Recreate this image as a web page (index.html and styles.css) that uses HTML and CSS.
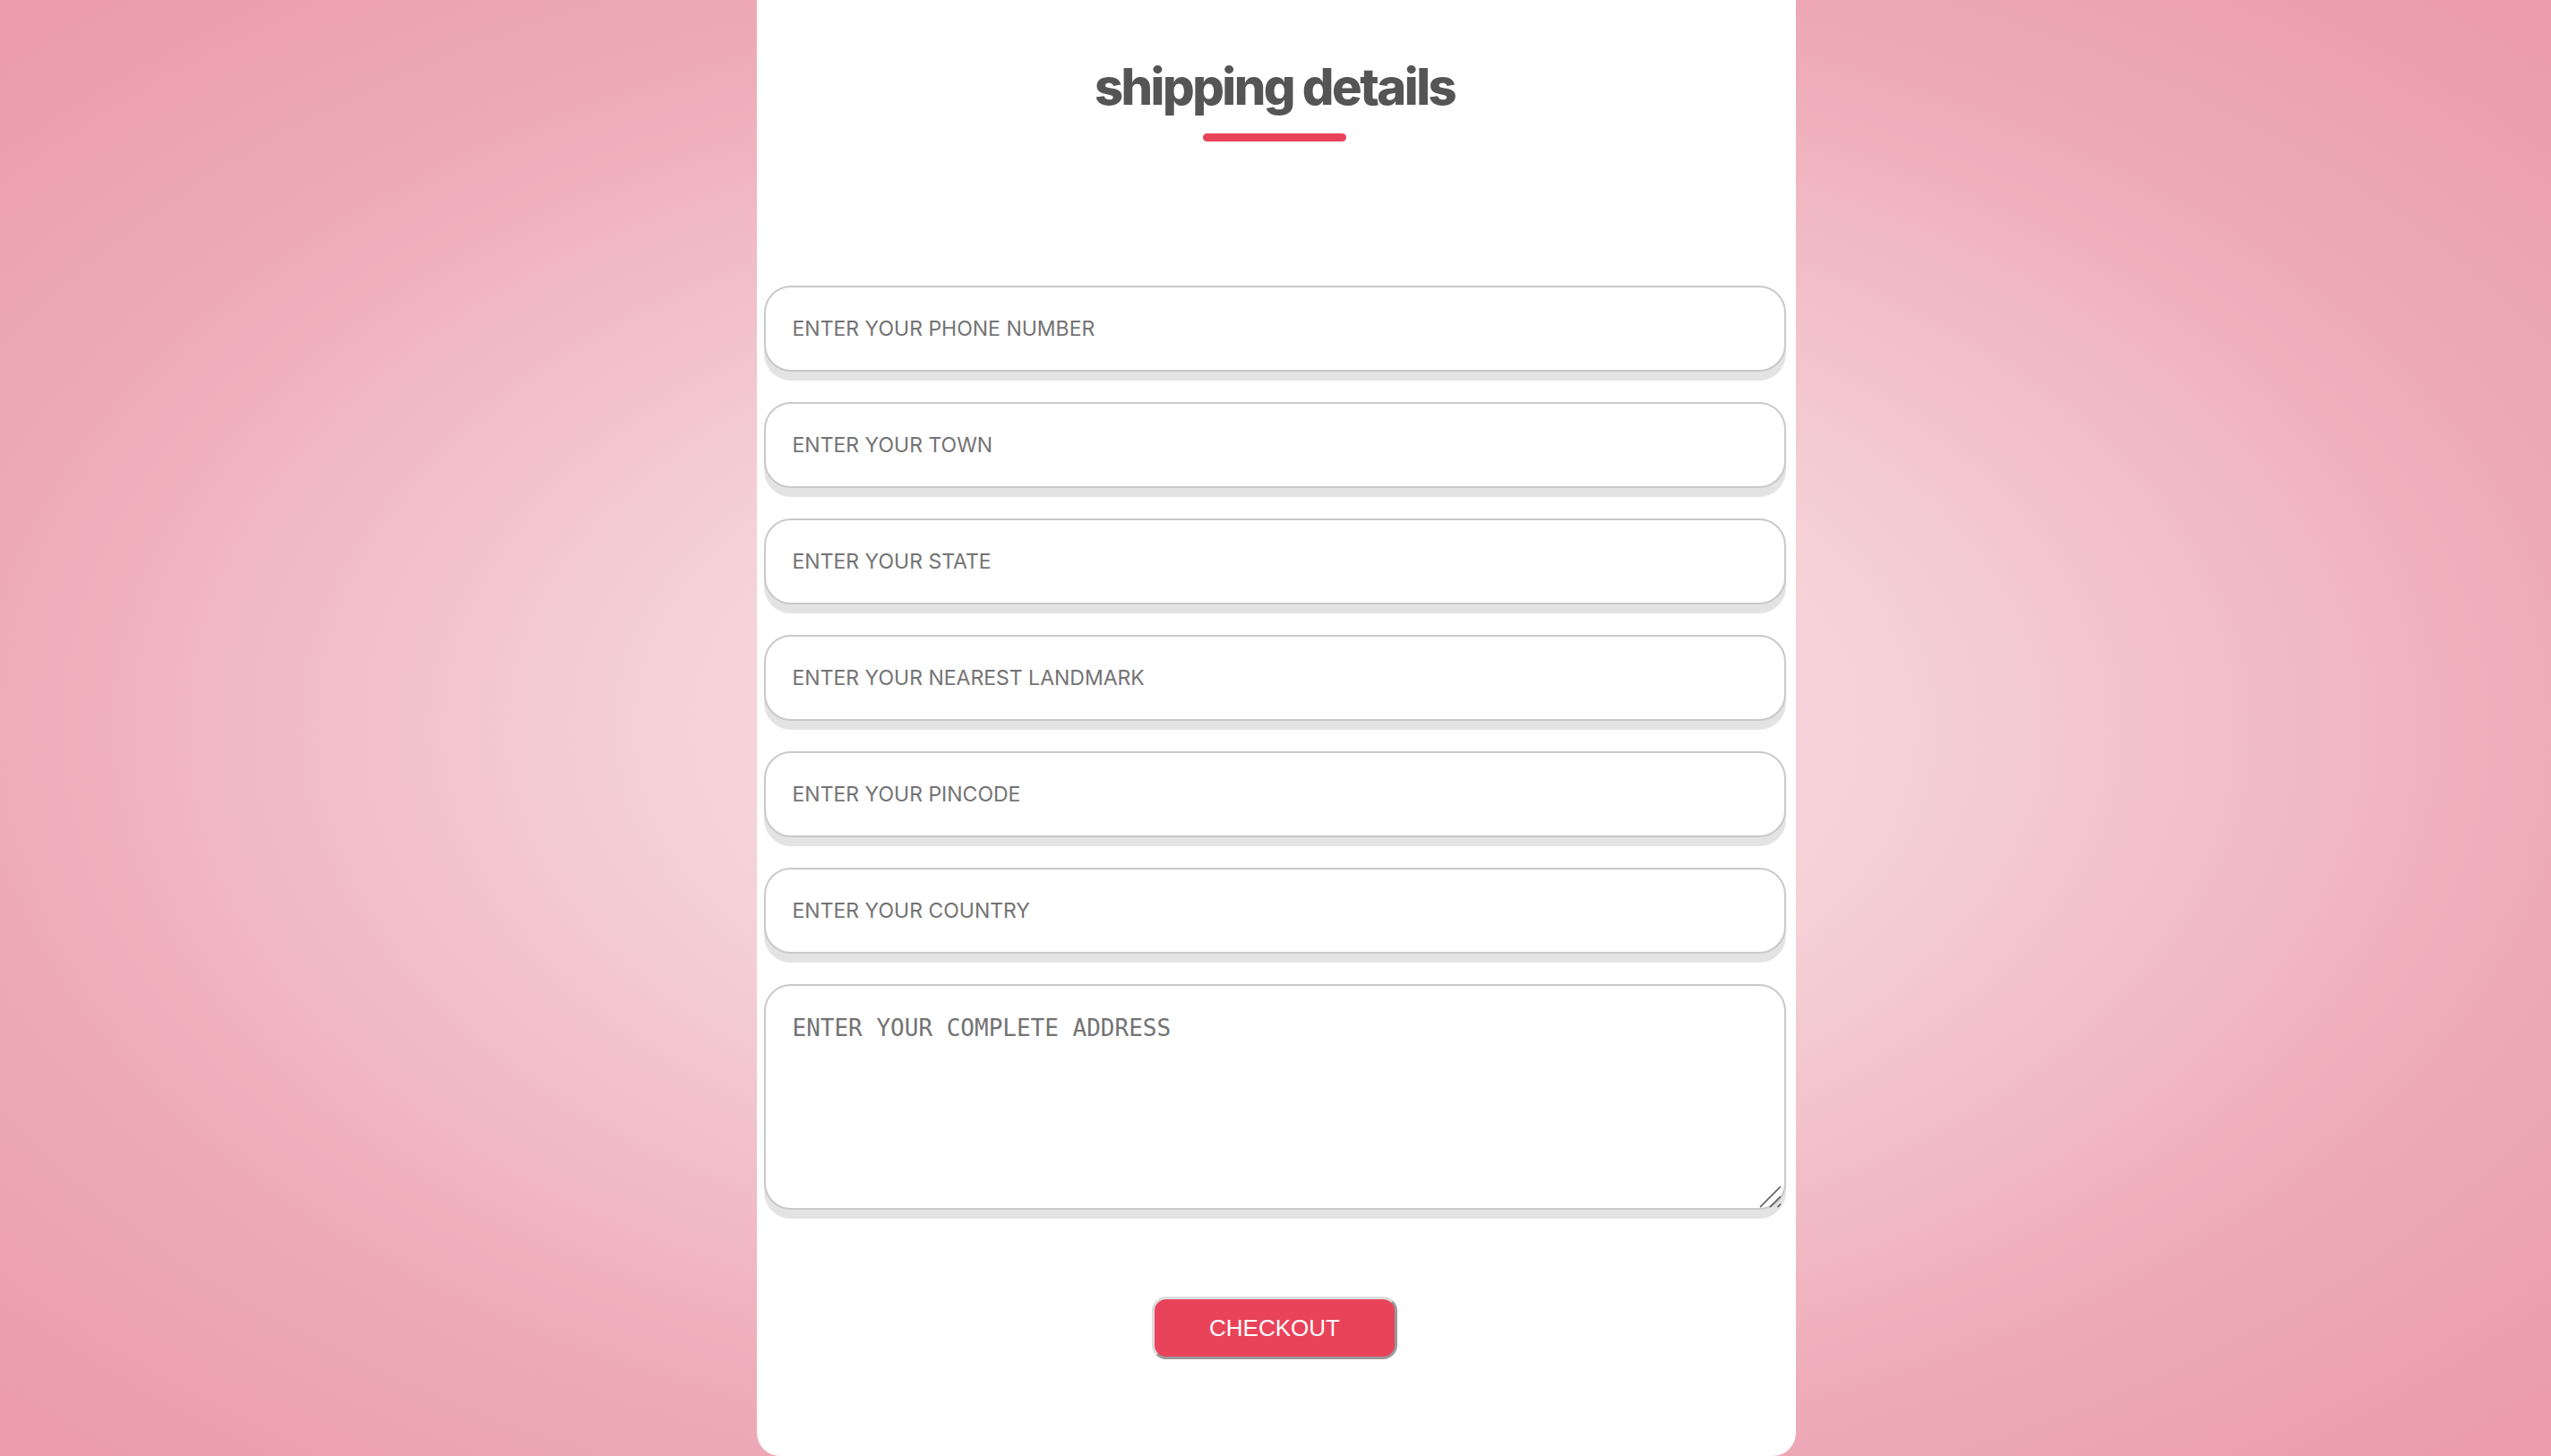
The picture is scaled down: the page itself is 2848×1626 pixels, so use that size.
FILE: index.html
```html
<!DOCTYPE html>
<html lang="en">
<head>
<meta charset="utf-8">
<title>Shipping details</title>
<link rel="stylesheet" href="styles.css">
</head>
<body>
<div class="page">
  <main class="card">
    <h1 class="title">shipping details</h1>
    <div class="bar"></div>
    <form class="form">
      <input class="field" type="text" placeholder="ENTER YOUR PHONE NUMBER">
      <input class="field" type="text" placeholder="ENTER YOUR TOWN">
      <input class="field" type="text" placeholder="ENTER YOUR STATE">
      <input class="field" type="text" placeholder="ENTER YOUR NEAREST LANDMARK">
      <input class="field" type="text" placeholder="ENTER YOUR PINCODE">
      <input class="field" type="text" placeholder="ENTER YOUR COUNTRY">
      <div class="area-wrap">
        <textarea class="field area" placeholder="ENTER YOUR COMPLETE ADDRESS"></textarea>
        <svg class="grip" width="26" height="26" viewBox="0 0 26 26" aria-hidden="true">
          <line x1="1" y1="25" x2="24" y2="2" />
          <line x1="12" y1="25" x2="24" y2="13" />
          <line x1="20.5" y1="25" x2="24" y2="21.5" />
        </svg>
      </div>
      <button class="checkout" type="button">CHECKOUT</button>
    </form>
  </main>
</div>
</body>
</html>
```

FILE: styles.css
```css
html, body {
  margin: 0;
  padding: 0;
  height: 100%;
}
body {
  overflow: hidden;
  background: radial-gradient(ellipse at center, #fae3e7 0%, #f5d0d7 35%, #eeaab7 72%, #ea9ba9 100%);
  font-family: Roboto, "Liberation Sans", sans-serif;
}
.page {
  display: flex;
  justify-content: center;
  height: 1626px;
  padding-left: 1px;
}
.card {
  width: 1160px;
  box-sizing: border-box;
  height: 1626px;
  background: #fff;
  border-radius: 0 0 26px 26px;
  padding: 0 11px 0 8px;
  display: flex;
  flex-direction: column;
  align-items: center;
}
.title {
  margin: 67px 0 0;
  font-family: Inter, "Noto Sans", sans-serif;
  font-weight: 800;
  font-size: 56px;
  line-height: 60px;
  color: #555;
  letter-spacing: -2.5px;
}
.bar {
  width: 160px;
  height: 9px;
  border-radius: 5px;
  background: #e9435a;
  margin-top: 22px;
}
.form {
  width: 100%;
  margin-top: 161px;
  display: flex;
  flex-direction: column;
  align-items: center;
  gap: 34px;
}
.field {
  width: 100%;
  box-sizing: border-box;
  height: 96px;
  border: 2px solid #c9c9c9;
  border-radius: 30px;
  box-shadow: 0 10px 1px #e3e3e3;
  padding: 0 30px;
  font-family: Inter, Roboto, sans-serif;
  font-size: 23px;
  letter-spacing: 0;
  color: #333;
  background: #fff;
  outline: none;
}
.field::placeholder {
  color: #737373;
}
.area-wrap {
  position: relative;
  width: 100%;
  display: flex;
}
.area {
  height: 252px;
  padding: 32px 31px 20px 30px;
  font-family: "DejaVu Sans Mono", monospace;
  font-size: 26px;
  letter-spacing: 0;
  line-height: 30px;
  resize: none;
}
.grip {
  position: absolute;
  right: 4px;
  bottom: 2px;
  stroke: #5a5a5a;
  stroke-width: 1.7;
  pointer-events: none;
}
.checkout {
  margin-top: 63px;
  width: 274px;
  height: 70px;
  box-sizing: border-box;
  background: #e9435a;
  color: #fff;
  border: 3px solid;
  border-color: #dcdcdc #9a9a9a #9a9a9a #dcdcdc;
  border-radius: 16px;
  font-family: "Liberation Sans", Arial, sans-serif;
  font-size: 26px;
  cursor: pointer;
}
```
